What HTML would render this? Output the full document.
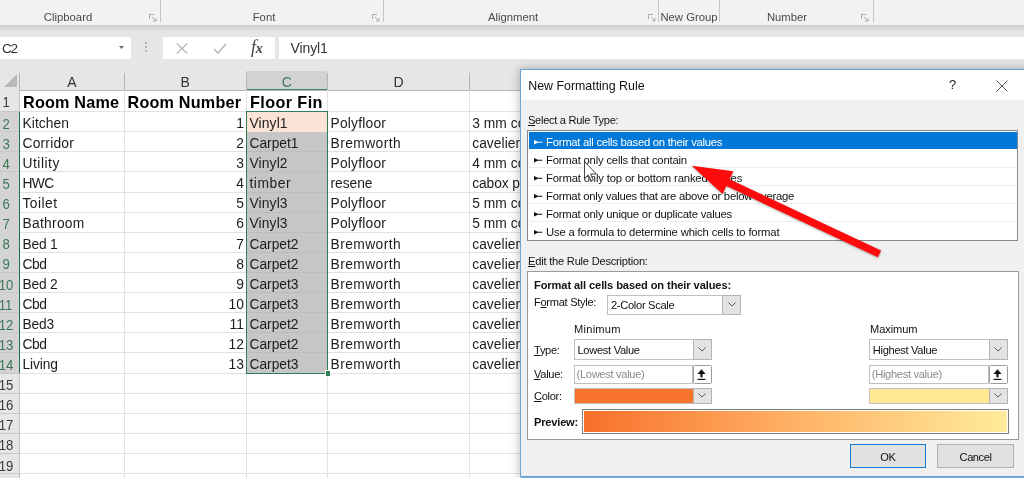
<!DOCTYPE html>
<html><head><meta charset="utf-8"><title>New Formatting Rule</title>
<style>
html,body{margin:0;padding:0;background:#fff;}
#s{position:relative;width:1024px;height:478px;overflow:hidden;background:#fff;opacity:0.999;font-family:"Liberation Sans",sans-serif;color:#1a1a1a;}
#s div,#s span{position:absolute;white-space:nowrap;}
.rb{font-size:11.3px;color:#4a4a4a;top:10px;height:14px;line-height:14px;transform:translateX(-50%);}
.vl{width:1px;background:#c4c4c4;top:0;height:22px;}
.ch{top:72px;height:19px;line-height:21px;font-size:14px;color:#333;text-align:center;}
.rh{left:-7px;width:26px;font-size:14.6px;color:#3a3a3a;text-align:center;}
.rh b{font-weight:normal;display:inline-block;transform:scaleX(0.9);}
.rh.sel{color:#3b7557;}
.gh{left:19.5px;height:1px;background:#e1e1e1;}
.gv{width:1px;background:#e1e1e1;top:90px;}
.c{font-size:13.8px;height:20px;line-height:20px;color:#1c1c1c;letter-spacing:0;}
.b{font-weight:bold;font-size:16.2px;color:#000;height:21px;line-height:21.5px;letter-spacing:0.2px;}
.d{font-size:11.1px;color:#111;height:16px;line-height:16px;letter-spacing:-0.3px;}
.li{left:534px;font-size:11.3px;height:18px;line-height:18px;color:#111;letter-spacing:-0.27px;}
.li svg{position:absolute;left:0;top:8.8px;}
.li b{font-weight:normal;position:absolute;left:12px;top:1.7px;}
.dd{background:#fff;border:1px solid #c0c0c0;box-sizing:border-box;}
.ddb{background:#e3e3e3;border:1px solid #b4b4b4;box-sizing:border-box;}
u{text-decoration:underline;}
</style></head><body>
<div id="s">

<div style="left:0;top:0;width:1024px;height:25px;background:#f3f2f1;"></div>
<div style="left:0;top:25px;width:1024px;height:46px;background:#e6e6e6;"></div>
<div style="left:0;top:24.5px;width:1024px;height:9px;background:linear-gradient(#cbcbcb,#d8d8d8 30%,#e2e2e2 65%,#e6e6e6);"></div>
<div class="rb" style="left:68px">Clipboard</div>
<div class="rb" style="left:264px">Font</div>
<div class="rb" style="left:513px">Alignment</div>
<div class="rb" style="left:689px">New Group</div>
<div class="rb" style="left:787px">Number</div>
<div class="vl" style="left:160px"></div>
<div class="vl" style="left:383px"></div>
<div class="vl" style="left:658.3px"></div>
<div class="vl" style="left:718.7px"></div>
<div class="vl" style="left:873px"></div>
<svg style="position:absolute;left:149.3px;top:14px" width="8" height="8" viewBox="0 0 8 8"><path d="M0.5 5V0.5H5M3 3L7 7M7 4V7H4" fill="none" stroke="#adadad" stroke-width="1"/></svg>
<svg style="position:absolute;left:372.3px;top:14px" width="8" height="8" viewBox="0 0 8 8"><path d="M0.5 5V0.5H5M3 3L7 7M7 4V7H4" fill="none" stroke="#adadad" stroke-width="1"/></svg>
<svg style="position:absolute;left:648.3px;top:14px" width="8" height="8" viewBox="0 0 8 8"><path d="M0.5 5V0.5H5M3 3L7 7M7 4V7H4" fill="none" stroke="#adadad" stroke-width="1"/></svg>
<svg style="position:absolute;left:861.3px;top:14px" width="8" height="8" viewBox="0 0 8 8"><path d="M0.5 5V0.5H5M3 3L7 7M7 4V7H4" fill="none" stroke="#adadad" stroke-width="1"/></svg>
<div style="left:0;top:36.8px;width:130.5px;height:22.2px;background:#fff;"></div>
<div style="left:2px;top:38.8px;font-size:13.6px;height:20px;line-height:20px;color:#333;letter-spacing:-1.2px;">C2</div>
<svg style="position:absolute;left:119px;top:46px" width="5" height="3" viewBox="0 0 5 3"><path d="M0 0H5L2.5 3Z" fill="#6a6a6a"/></svg>
<div style="left:145px;top:42px;width:2px;height:2px;background:#b5b5b5;"></div>
<div style="left:145px;top:46px;width:2px;height:2px;background:#b5b5b5;"></div>
<div style="left:145px;top:50px;width:2px;height:2px;background:#b5b5b5;"></div>
<div style="left:163px;top:36.8px;width:112px;height:22.2px;background:#fff;"></div>
<svg style="position:absolute;left:176px;top:43px" width="12" height="11" viewBox="0 0 12 11"><path d="M0.8 0.5L11.2 10.5M11.2 0.5L0.8 10.5" fill="none" stroke="#b9b9b9" stroke-width="1.3"/></svg>
<svg style="position:absolute;left:213px;top:43px" width="14" height="11" viewBox="0 0 14 11"><path d="M1 6L5 10L13 1" fill="none" stroke="#b9b9b9" stroke-width="1.6"/></svg>
<div style="left:251px;top:37px;font-family:'Liberation Serif',serif;font-style:italic;font-size:18px;height:22px;line-height:21px;color:#444;letter-spacing:-0.3px;">f<span style="position:static;font-size:14px;font-weight:bold;">x</span></div>
<div style="left:279px;top:36.8px;width:745px;height:22.2px;background:#fff;"></div>
<div style="left:290.5px;top:38px;font-size:14px;height:20px;line-height:20.5px;color:#333;letter-spacing:-0.1px;">Vinyl1</div>
<div style="left:0;top:70px;width:1024px;height:20.4px;background:#e6e6e6;"></div>
<div style="left:246.2px;top:70.5px;width:81.19999999999999px;height:18.5px;background:#d2d2d2;"></div>
<div style="left:246.2px;top:88.9px;width:81.19999999999999px;height:1.6px;background:#3c8560;"></div>
<svg style="position:absolute;left:3px;top:73px" width="15" height="15" viewBox="0 0 15 15"><path d="M14 1V14H1Z" fill="#b9b9b9"/></svg>
<div class="ch" style="left:19.5px;width:104.7px;">A</div>
<div class="ch" style="left:124.2px;width:121.99999999999999px;">B</div>
<div class="ch" style="left:246.2px;width:81.19999999999999px;color:#3f7a5c;">C</div>
<div class="ch" style="left:327.4px;width:142.10000000000002px;">D</div>
<div style="left:19.0px;top:73px;width:1px;height:17px;background:#b4b4b4;"></div>
<div style="left:123.7px;top:73px;width:1px;height:17px;background:#b4b4b4;"></div>
<div style="left:245.7px;top:73px;width:1px;height:17px;background:#b4b4b4;"></div>
<div style="left:326.9px;top:73px;width:1px;height:17px;background:#b4b4b4;"></div>
<div style="left:469.0px;top:73px;width:1px;height:17px;background:#b4b4b4;"></div>
<div style="left:0;top:90px;width:1024px;height:1px;background:#b6b6b6;"></div>
<div style="left:0;top:90.4px;width:19.5px;height:400px;background:#e6e6e6;"></div>
<div class="rh" style="top:90.4px;height:21.2px;line-height:25.2px;"><b>1</b></div>
<div style="left:0;top:111.1px;width:19.5px;height:1px;background:#c8c8c8;"></div>
<div style="left:0;top:111.6px;height:20.1px;width:19.5px;background:#d3d3d3;"></div>
<div class="rh sel" style="top:111.6px;height:20.1px;line-height:24.1px;"><b>2</b></div>
<div style="left:0;top:131.2px;width:19.5px;height:1px;background:#c8c8c8;"></div>
<div style="left:0;top:131.7px;height:20.1px;width:19.5px;background:#d3d3d3;"></div>
<div class="rh sel" style="top:131.7px;height:20.1px;line-height:24.1px;"><b>3</b></div>
<div style="left:0;top:151.3px;width:19.5px;height:1px;background:#c8c8c8;"></div>
<div style="left:0;top:151.8px;height:20.1px;width:19.5px;background:#d3d3d3;"></div>
<div class="rh sel" style="top:151.8px;height:20.1px;line-height:24.1px;"><b>4</b></div>
<div style="left:0;top:171.4px;width:19.5px;height:1px;background:#c8c8c8;"></div>
<div style="left:0;top:171.9px;height:20.1px;width:19.5px;background:#d3d3d3;"></div>
<div class="rh sel" style="top:171.9px;height:20.1px;line-height:24.1px;"><b>5</b></div>
<div style="left:0;top:191.5px;width:19.5px;height:1px;background:#c8c8c8;"></div>
<div style="left:0;top:192.0px;height:20.1px;width:19.5px;background:#d3d3d3;"></div>
<div class="rh sel" style="top:192.0px;height:20.1px;line-height:24.1px;"><b>6</b></div>
<div style="left:0;top:211.6px;width:19.5px;height:1px;background:#c8c8c8;"></div>
<div style="left:0;top:212.1px;height:20.1px;width:19.5px;background:#d3d3d3;"></div>
<div class="rh sel" style="top:212.1px;height:20.1px;line-height:24.1px;"><b>7</b></div>
<div style="left:0;top:231.8px;width:19.5px;height:1px;background:#c8c8c8;"></div>
<div style="left:0;top:232.3px;height:20.1px;width:19.5px;background:#d3d3d3;"></div>
<div class="rh sel" style="top:232.3px;height:20.1px;line-height:24.1px;"><b>8</b></div>
<div style="left:0;top:251.9px;width:19.5px;height:1px;background:#c8c8c8;"></div>
<div style="left:0;top:252.4px;height:20.1px;width:19.5px;background:#d3d3d3;"></div>
<div class="rh sel" style="top:252.4px;height:20.1px;line-height:24.1px;"><b>9</b></div>
<div style="left:0;top:272.0px;width:19.5px;height:1px;background:#c8c8c8;"></div>
<div style="left:0;top:272.5px;height:20.1px;width:19.5px;background:#d3d3d3;"></div>
<div class="rh sel" style="top:272.5px;height:20.1px;line-height:24.1px;"><b>10</b></div>
<div style="left:0;top:292.1px;width:19.5px;height:1px;background:#c8c8c8;"></div>
<div style="left:0;top:292.6px;height:20.1px;width:19.5px;background:#d3d3d3;"></div>
<div class="rh sel" style="top:292.6px;height:20.1px;line-height:24.1px;"><b>11</b></div>
<div style="left:0;top:312.2px;width:19.5px;height:1px;background:#c8c8c8;"></div>
<div style="left:0;top:312.7px;height:20.1px;width:19.5px;background:#d3d3d3;"></div>
<div class="rh sel" style="top:312.7px;height:20.1px;line-height:24.1px;"><b>12</b></div>
<div style="left:0;top:332.3px;width:19.5px;height:1px;background:#c8c8c8;"></div>
<div style="left:0;top:332.8px;height:20.1px;width:19.5px;background:#d3d3d3;"></div>
<div class="rh sel" style="top:332.8px;height:20.1px;line-height:24.1px;"><b>13</b></div>
<div style="left:0;top:352.4px;width:19.5px;height:1px;background:#c8c8c8;"></div>
<div style="left:0;top:352.9px;height:20.1px;width:19.5px;background:#d3d3d3;"></div>
<div class="rh sel" style="top:352.9px;height:20.1px;line-height:24.1px;"><b>14</b></div>
<div style="left:0;top:372.5px;width:19.5px;height:1px;background:#c8c8c8;"></div>
<div class="rh" style="top:373.0px;height:20.1px;line-height:24.1px;"><b>15</b></div>
<div style="left:0;top:392.6px;width:19.5px;height:1px;background:#c8c8c8;"></div>
<div class="rh" style="top:393.1px;height:20.1px;line-height:24.1px;"><b>16</b></div>
<div style="left:0;top:412.8px;width:19.5px;height:1px;background:#c8c8c8;"></div>
<div class="rh" style="top:413.2px;height:20.1px;line-height:24.1px;"><b>17</b></div>
<div style="left:0;top:432.9px;width:19.5px;height:1px;background:#c8c8c8;"></div>
<div class="rh" style="top:433.4px;height:20.1px;line-height:24.1px;"><b>18</b></div>
<div style="left:0;top:453.0px;width:19.5px;height:1px;background:#c8c8c8;"></div>
<div class="rh" style="top:453.5px;height:20.1px;line-height:24.1px;"><b>19</b></div>
<div style="left:0;top:473.1px;width:19.5px;height:1px;background:#c8c8c8;"></div>
<div style="left:18.6px;top:111.6px;width:1.6px;height:261.4px;background:#217346;"></div>
<div style="left:19px;top:90.4px;width:1px;height:21px;background:#c0c0c0;"></div>
<div style="left:19px;top:373.0px;width:1px;height:110px;background:#c0c0c0;"></div>
<div class="gh" style="top:111.1px;width:1005px;"></div>
<div class="gh" style="top:131.2px;width:1005px;"></div>
<div class="gh" style="top:151.3px;width:1005px;"></div>
<div class="gh" style="top:171.4px;width:1005px;"></div>
<div class="gh" style="top:191.5px;width:1005px;"></div>
<div class="gh" style="top:211.6px;width:1005px;"></div>
<div class="gh" style="top:231.8px;width:1005px;"></div>
<div class="gh" style="top:251.9px;width:1005px;"></div>
<div class="gh" style="top:272.0px;width:1005px;"></div>
<div class="gh" style="top:292.1px;width:1005px;"></div>
<div class="gh" style="top:312.2px;width:1005px;"></div>
<div class="gh" style="top:332.3px;width:1005px;"></div>
<div class="gh" style="top:352.4px;width:1005px;"></div>
<div class="gh" style="top:372.5px;width:1005px;"></div>
<div class="gh" style="top:392.6px;width:1005px;"></div>
<div class="gh" style="top:412.8px;width:1005px;"></div>
<div class="gh" style="top:432.9px;width:1005px;"></div>
<div class="gh" style="top:453.0px;width:1005px;"></div>
<div class="gh" style="top:473.1px;width:1005px;"></div>
<div class="gv" style="left:123.7px;height:388px;"></div>
<div class="gv" style="left:245.7px;height:388px;"></div>
<div class="gv" style="left:326.9px;height:388px;"></div>
<div class="gv" style="left:469.0px;height:388px;"></div>
<div style="left:246.2px;top:111.6px;width:81.19999999999999px;height:20.11px;background:#fbe3d6;"></div>
<div style="left:246.2px;top:131.7px;width:81.19999999999999px;height:241.3px;background:#c6c6c6;"></div>
<div style="left:246.2px;top:151.3px;width:81.19999999999999px;height:1px;background:#bcbcbc;"></div>
<div style="left:246.2px;top:171.4px;width:81.19999999999999px;height:1px;background:#bcbcbc;"></div>
<div style="left:246.2px;top:191.5px;width:81.19999999999999px;height:1px;background:#bcbcbc;"></div>
<div style="left:246.2px;top:211.6px;width:81.19999999999999px;height:1px;background:#bcbcbc;"></div>
<div style="left:246.2px;top:231.8px;width:81.19999999999999px;height:1px;background:#bcbcbc;"></div>
<div style="left:246.2px;top:251.9px;width:81.19999999999999px;height:1px;background:#bcbcbc;"></div>
<div style="left:246.2px;top:272.0px;width:81.19999999999999px;height:1px;background:#bcbcbc;"></div>
<div style="left:246.2px;top:292.1px;width:81.19999999999999px;height:1px;background:#bcbcbc;"></div>
<div style="left:246.2px;top:312.2px;width:81.19999999999999px;height:1px;background:#bcbcbc;"></div>
<div style="left:246.2px;top:332.3px;width:81.19999999999999px;height:1px;background:#bcbcbc;"></div>
<div style="left:246.2px;top:352.4px;width:81.19999999999999px;height:1px;background:#bcbcbc;"></div>
<div style="left:246.0px;top:110.8px;width:81.6px;height:262.8px;border:1.4px solid #2f7d55;box-sizing:border-box;"></div>
<div style="left:324.59999999999997px;top:370.4px;width:4.2px;height:4.2px;background:#2f7d55;border:0.8px solid #fff;"></div>
<div class="c b" style="left:23px;top:92.0px;">Room Name</div>
<div class="c b" style="left:127.5px;top:92.0px;">Room Number</div>
<div class="c b" style="left:250px;top:92.0px;letter-spacing:0.4px;">Floor Fin</div>
<div class="c" style="left:22.5px;top:113.8px;letter-spacing:0.06px;">Kitchen</div>
<div class="c" style="left:124.2px;width:119.69999999999999px;text-align:right;top:113.8px;">1</div>
<div class="c" style="left:249.5px;top:113.8px;letter-spacing:0.14px;">Vinyl1</div>
<div class="c" style="left:330.5px;top:113.8px;letter-spacing:0.22px;">Polyfloor</div>
<div class="c" style="left:472.2px;top:113.8px;letter-spacing:0.06px;">3 mm co</div>
<div class="c" style="left:22.5px;top:133.9px;letter-spacing:0.21px;">Corridor</div>
<div class="c" style="left:124.2px;width:119.69999999999999px;text-align:right;top:133.9px;">2</div>
<div class="c" style="left:249.5px;top:133.9px;letter-spacing:-0.01px;">Carpet1</div>
<div class="c" style="left:330.5px;top:133.9px;letter-spacing:0.43px;">Bremworth</div>
<div class="c" style="left:472.2px;top:133.9px;letter-spacing:0.05px;">cavelier</div>
<div class="c" style="left:22.5px;top:154.0px;letter-spacing:0.51px;">Utility</div>
<div class="c" style="left:124.2px;width:119.69999999999999px;text-align:right;top:154.0px;">3</div>
<div class="c" style="left:249.5px;top:154.0px;letter-spacing:0.14px;">Vinyl2</div>
<div class="c" style="left:330.5px;top:154.0px;letter-spacing:0.22px;">Polyfloor</div>
<div class="c" style="left:472.2px;top:154.0px;letter-spacing:0.06px;">4 mm co</div>
<div class="c" style="left:22.5px;top:174.1px;letter-spacing:-0.62px;">HWC</div>
<div class="c" style="left:124.2px;width:119.69999999999999px;text-align:right;top:174.1px;">4</div>
<div class="c" style="left:249.5px;top:174.1px;letter-spacing:0.54px;">timber</div>
<div class="c" style="left:330.5px;top:174.1px;letter-spacing:-0.04px;">resene</div>
<div class="c" style="left:472.2px;top:174.1px;letter-spacing:-0.09px;">cabox p</div>
<div class="c" style="left:22.5px;top:194.2px;letter-spacing:0.47px;">Toilet</div>
<div class="c" style="left:124.2px;width:119.69999999999999px;text-align:right;top:194.2px;">5</div>
<div class="c" style="left:249.5px;top:194.2px;letter-spacing:0.14px;">Vinyl3</div>
<div class="c" style="left:330.5px;top:194.2px;letter-spacing:0.22px;">Polyfloor</div>
<div class="c" style="left:472.2px;top:194.2px;letter-spacing:0.06px;">5 mm co</div>
<div class="c" style="left:22.5px;top:214.3px;letter-spacing:0.28px;">Bathroom</div>
<div class="c" style="left:124.2px;width:119.69999999999999px;text-align:right;top:214.3px;">6</div>
<div class="c" style="left:249.5px;top:214.3px;letter-spacing:0.14px;">Vinyl3</div>
<div class="c" style="left:330.5px;top:214.3px;letter-spacing:0.22px;">Polyfloor</div>
<div class="c" style="left:472.2px;top:214.3px;letter-spacing:0.06px;">5 mm co</div>
<div class="c" style="left:22.5px;top:234.5px;letter-spacing:-0.22px;">Bed 1</div>
<div class="c" style="left:124.2px;width:119.69999999999999px;text-align:right;top:234.5px;">7</div>
<div class="c" style="left:249.5px;top:234.5px;letter-spacing:-0.01px;">Carpet2</div>
<div class="c" style="left:330.5px;top:234.5px;letter-spacing:0.43px;">Bremworth</div>
<div class="c" style="left:472.2px;top:234.5px;letter-spacing:0.05px;">cavelier</div>
<div class="c" style="left:22.5px;top:254.6px;letter-spacing:-0.42px;">Cbd</div>
<div class="c" style="left:124.2px;width:119.69999999999999px;text-align:right;top:254.6px;">8</div>
<div class="c" style="left:249.5px;top:254.6px;letter-spacing:-0.01px;">Carpet2</div>
<div class="c" style="left:330.5px;top:254.6px;letter-spacing:0.43px;">Bremworth</div>
<div class="c" style="left:472.2px;top:254.6px;letter-spacing:0.05px;">cavelier</div>
<div class="c" style="left:22.5px;top:274.7px;letter-spacing:-0.22px;">Bed 2</div>
<div class="c" style="left:124.2px;width:119.69999999999999px;text-align:right;top:274.7px;">9</div>
<div class="c" style="left:249.5px;top:274.7px;letter-spacing:-0.01px;">Carpet3</div>
<div class="c" style="left:330.5px;top:274.7px;letter-spacing:0.43px;">Bremworth</div>
<div class="c" style="left:472.2px;top:274.7px;letter-spacing:0.05px;">cavelier</div>
<div class="c" style="left:22.5px;top:294.8px;letter-spacing:-0.42px;">Cbd</div>
<div class="c" style="left:124.2px;width:119.69999999999999px;text-align:right;top:294.8px;">10</div>
<div class="c" style="left:249.5px;top:294.8px;letter-spacing:-0.01px;">Carpet3</div>
<div class="c" style="left:330.5px;top:294.8px;letter-spacing:0.43px;">Bremworth</div>
<div class="c" style="left:472.2px;top:294.8px;letter-spacing:0.05px;">cavelier</div>
<div class="c" style="left:22.5px;top:314.9px;letter-spacing:-0.18px;">Bed3</div>
<div class="c" style="left:124.2px;width:119.69999999999999px;text-align:right;top:314.9px;">11</div>
<div class="c" style="left:249.5px;top:314.9px;letter-spacing:-0.01px;">Carpet2</div>
<div class="c" style="left:330.5px;top:314.9px;letter-spacing:0.43px;">Bremworth</div>
<div class="c" style="left:472.2px;top:314.9px;letter-spacing:0.05px;">cavelier</div>
<div class="c" style="left:22.5px;top:335.0px;letter-spacing:-0.42px;">Cbd</div>
<div class="c" style="left:124.2px;width:119.69999999999999px;text-align:right;top:335.0px;">12</div>
<div class="c" style="left:249.5px;top:335.0px;letter-spacing:-0.01px;">Carpet2</div>
<div class="c" style="left:330.5px;top:335.0px;letter-spacing:0.43px;">Bremworth</div>
<div class="c" style="left:472.2px;top:335.0px;letter-spacing:0.05px;">cavelier</div>
<div class="c" style="left:22.5px;top:355.1px;letter-spacing:-0.12px;">Living</div>
<div class="c" style="left:124.2px;width:119.69999999999999px;text-align:right;top:355.1px;">13</div>
<div class="c" style="left:249.5px;top:355.1px;letter-spacing:-0.01px;">Carpet3</div>
<div class="c" style="left:330.5px;top:355.1px;letter-spacing:0.43px;">Bremworth</div>
<div class="c" style="left:472.2px;top:355.1px;letter-spacing:0.05px;">cavelier</div>
<div style="left:520px;top:69px;width:520px;height:407.5px;background:#f0f0f0;border:1px solid #6fa3d0;box-sizing:border-box;box-shadow:0 0 9px 1px rgba(0,0,0,0.24);"></div>
<div style="left:521px;top:70px;width:503px;height:30px;background:#fff;"></div>
<div style="left:528.2px;top:76px;font-size:12.4px;height:20px;line-height:20px;color:#111;">New Formatting Rule</div>
<div style="left:949px;top:75px;font-size:13px;height:20px;line-height:20px;color:#222;">?</div>
<svg style="position:absolute;left:996px;top:79.5px" width="12" height="12" viewBox="0 0 12 12"><path d="M0.5 0.5L11.5 11.5M11.5 0.5L0.5 11.5" fill="none" stroke="#444" stroke-width="0.9"/></svg>
<div class="d" style="left:528px;top:111.5px;"><u>S</u>elect a Rule Type:</div>
<div style="left:527px;top:130px;width:491px;height:111px;background:#fff;border:1px solid #868a92;box-sizing:border-box;"></div>
<div style="left:529px;top:131.5px;width:487.5px;height:17px;background:#0078d7;"></div>
<div class="li" style="top:131px;color:#fff;letter-spacing:-0.270px;"><svg width="9" height="5" viewBox="0 0 9 5"><path d="M0 0L4.8 2.2L0 4.4Z M4 1.7H8.3V2.7H4Z" fill="#fff"/></svg><b>Format all cells based on their values</b></div>
<div class="li" style="top:149px;letter-spacing:-0.200px;"><svg width="9" height="5" viewBox="0 0 9 5"><path d="M0 0L4.8 2.2L0 4.4Z M4 1.7H8.3V2.7H4Z" fill="#111"/></svg><b>Format only cells that contain</b></div>
<div style="left:529px;top:166.5px;width:487px;height:1px;background:#ededed;"></div>
<div class="li" style="top:167px;letter-spacing:-0.170px;"><svg width="9" height="5" viewBox="0 0 9 5"><path d="M0 0L4.8 2.2L0 4.4Z M4 1.7H8.3V2.7H4Z" fill="#111"/></svg><b>Format only top or bottom ranked values</b></div>
<div style="left:529px;top:184.5px;width:487px;height:1px;background:#ededed;"></div>
<div class="li" style="top:185px;letter-spacing:-0.250px;"><svg width="9" height="5" viewBox="0 0 9 5"><path d="M0 0L4.8 2.2L0 4.4Z M4 1.7H8.3V2.7H4Z" fill="#111"/></svg><b>Format only values that are above or below average</b></div>
<div style="left:529px;top:202.5px;width:487px;height:1px;background:#ededed;"></div>
<div class="li" style="top:203px;letter-spacing:-0.210px;"><svg width="9" height="5" viewBox="0 0 9 5"><path d="M0 0L4.8 2.2L0 4.4Z M4 1.7H8.3V2.7H4Z" fill="#111"/></svg><b>Format only unique or duplicate values</b></div>
<div style="left:529px;top:220.5px;width:487px;height:1px;background:#ededed;"></div>
<div class="li" style="top:221px;letter-spacing:-0.174px;"><svg width="9" height="5" viewBox="0 0 9 5"><path d="M0 0L4.8 2.2L0 4.4Z M4 1.7H8.3V2.7H4Z" fill="#111"/></svg><b>Use a formula to determine which cells to format</b></div>
<div class="d" style="left:528px;top:252.5px;letter-spacing:-0.21px;"><u>E</u>dit the Rule Description:</div>
<div style="left:527px;top:270.5px;width:491.5px;height:169px;background:#fff;border:1px solid #9a9a9a;box-sizing:border-box;"></div>
<div class="d" style="left:534px;top:276.6px;font-weight:bold;letter-spacing:-0.1px;">Format all cells based on their values:</div>
<div class="d" style="left:534px;top:294px;">F<u>o</u>rmat Style:</div>
<div class="dd" style="left:607px;top:294.5px;width:134.29999999999995px;height:20.5px;"></div>
<div class="ddb" style="left:722.3px;top:294.5px;width:19px;height:20.5px;"></div>
<svg style="position:absolute;left:727.6999999999999px;top:302.45px" width="8" height="5" viewBox="0 0 8 5"><path d="M0.4 0.4L4 4.1L7.6 0.4" fill="none" stroke="#555" stroke-width="0.95"/></svg>
<div class="d" style="left:611px;top:296.75px;color:#111;">2-Color Scale</div>
<div class="d" style="left:574px;top:321px;letter-spacing:0.25px;">Minimum</div>
<div class="d" style="left:870px;top:321px;letter-spacing:-0.1px;">Maximum</div>
<div class="d" style="left:534px;top:342px;"><u>T</u>ype:</div>
<div class="d" style="left:534px;top:366px;"><u>V</u>alue:</div>
<div class="d" style="left:534px;top:388px;"><u>C</u>olor:</div>
<div class="dd" style="left:573.5px;top:339px;width:138.0px;height:21px;"></div>
<div class="ddb" style="left:692.5px;top:339px;width:19px;height:21px;"></div>
<svg style="position:absolute;left:697.9px;top:347.2px" width="8" height="5" viewBox="0 0 8 5"><path d="M0.4 0.4L4 4.1L7.6 0.4" fill="none" stroke="#555" stroke-width="0.95"/></svg>
<div class="d" style="left:577.5px;top:341.5px;color:#111;">Lowest Value</div>
<div class="dd" style="left:868.8px;top:339px;width:138.80000000000007px;height:21px;"></div>
<div class="ddb" style="left:988.6px;top:339px;width:19px;height:21px;"></div>
<svg style="position:absolute;left:994.0px;top:347.2px" width="8" height="5" viewBox="0 0 8 5"><path d="M0.4 0.4L4 4.1L7.6 0.4" fill="none" stroke="#555" stroke-width="0.95"/></svg>
<div class="d" style="left:872.8px;top:341.5px;color:#111;">Highest Value</div>
<div class="dd" style="left:573.5px;top:364.5px;width:119.0px;height:19.0px;"></div>
<div class="d" style="left:576.5px;top:366.0px;color:#8a8a8a;">(Lowest value)</div>
<div style="left:692.5px;top:364.5px;width:19px;height:19.0px;background:#fdfdfd;border:1px solid #9c9c9c;border-radius:1.5px;box-sizing:border-box;"></div>
<svg style="position:absolute;left:695.8px;top:368.5px" width="11" height="12" viewBox="0 0 11 12"><path d="M5.5 0.3L9.6 4.9H6.6V8.2H4.4V4.9H1.4Z" fill="#111"/><path d="M1.6 10.4H9.4" stroke="#111" stroke-width="1.2"/></svg>
<div class="dd" style="left:868.8px;top:364.5px;width:119.80000000000007px;height:19.0px;"></div>
<div class="d" style="left:871.8px;top:366.0px;color:#8a8a8a;">(Highest value)</div>
<div style="left:988.6px;top:364.5px;width:19px;height:19.0px;background:#fdfdfd;border:1px solid #9c9c9c;border-radius:1.5px;box-sizing:border-box;"></div>
<svg style="position:absolute;left:991.9px;top:368.5px" width="11" height="12" viewBox="0 0 11 12"><path d="M5.5 0.3L9.6 4.9H6.6V8.2H4.4V4.9H1.4Z" fill="#111"/><path d="M1.6 10.4H9.4" stroke="#111" stroke-width="1.2"/></svg>
<div class="dd" style="left:573.5px;top:388px;width:138.0px;height:15.5px;"></div>
<div style="left:574.5px;top:389px;width:118.0px;height:13.5px;background:#f8742c;"></div>
<div class="ddb" style="left:692.5px;top:388px;width:19px;height:15.5px;"></div>
<svg style="position:absolute;left:697.9px;top:393.45px" width="8" height="5" viewBox="0 0 8 5"><path d="M0.4 0.4L4 4.1L7.6 0.4" fill="none" stroke="#555" stroke-width="0.95"/></svg>
<div class="dd" style="left:868.8px;top:388px;width:138.80000000000007px;height:15.5px;"></div>
<div style="left:869.8px;top:389px;width:118.80000000000007px;height:13.5px;background:#ffe993;"></div>
<div class="ddb" style="left:988.6px;top:388px;width:19px;height:15.5px;"></div>
<svg style="position:absolute;left:994.0px;top:393.45px" width="8" height="5" viewBox="0 0 8 5"><path d="M0.4 0.4L4 4.1L7.6 0.4" fill="none" stroke="#555" stroke-width="0.95"/></svg>
<div class="d" style="left:534px;top:414px;font-weight:bold;letter-spacing:-0.2px;">Preview:</div>
<div style="left:581.5px;top:409px;width:427px;height:25px;background:linear-gradient(90deg,#f8702a,#ffb266 50%,#ffec9c);border:1px solid #7f7f7f;box-sizing:border-box;box-shadow:inset 0 0 0 1px #fff;"></div>
<div style="left:850px;top:444.2px;width:76px;height:23.8px;background:#e1e1e1;border:1.6px solid #1a78d0;box-sizing:border-box;"></div>
<div class="d" style="left:850px;width:76px;text-align:center;top:448.5px;">OK</div>
<div style="left:937px;top:444.2px;width:77px;height:23.8px;background:#e1e1e1;border:1px solid #b2b2b2;box-sizing:border-box;"></div>
<div class="d" style="left:937px;width:77px;text-align:center;top:448.5px;letter-spacing:-0.45px;">Cancel</div>
<div style="left:521px;top:475.6px;width:503px;height:2.4px;background:linear-gradient(#4f93d2,#8fb9e2);"></div>
<svg style="position:absolute;left:583.8px;top:161.3px" width="14" height="21" viewBox="0 0 14 21"><path d="M0.5 0.5V17.5L4.3 13.8L7 20L9.3 19L6.7 13H12.3Z" fill="#fff" fill-opacity="0.8" stroke="#333" stroke-width="0.9"/></svg>
<svg style="position:absolute;left:680px;top:150px;filter:drop-shadow(0.6px 1.4px 1.1px rgba(0,0,0,0.32));" width="220" height="125" viewBox="680 150 220 125"><path d="M691.7 165.7L733.4 171.3L729.6 179.3L881.1 250.5L877.9 257.3L726.4 186.1L722.6 194.1Z" fill="#fb0b0b"/></svg>
</div></body></html>
